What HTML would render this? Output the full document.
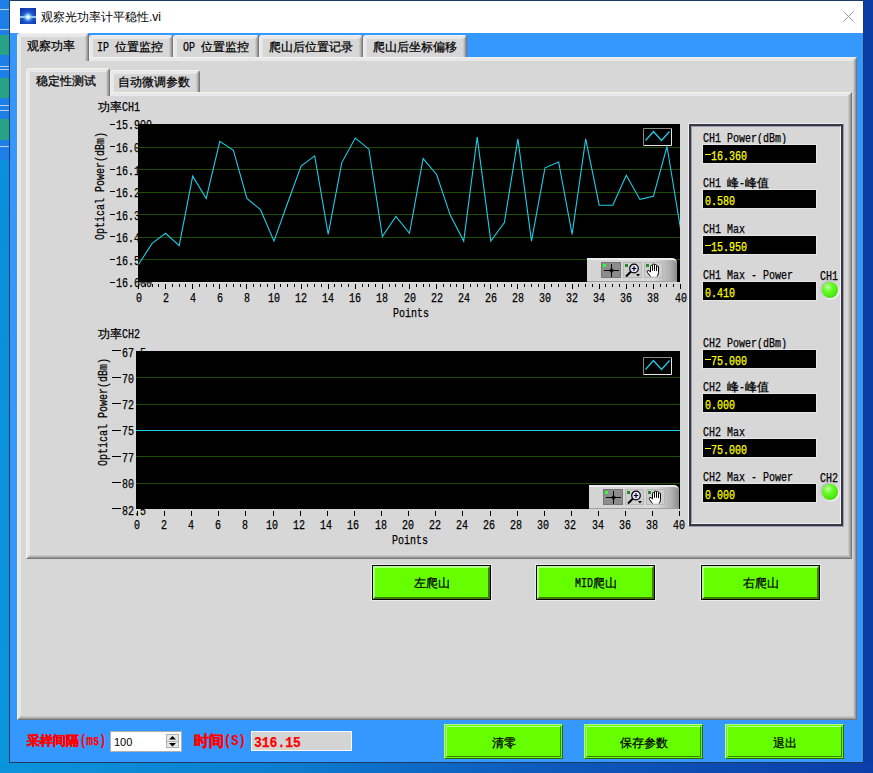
<!DOCTYPE html>
<html><head><meta charset="utf-8">
<style>
*{margin:0;padding:0;box-sizing:border-box}
html,body{width:873px;height:773px;overflow:hidden}
body{position:relative;background:#0a3ca6;font-family:"Liberation Mono",monospace;font-size:12px;color:#000}
.a{position:absolute}
.t{position:absolute;white-space:pre;font-family:"Liberation Mono",monospace;font-size:12px;line-height:12px;transform-origin:0 0;-webkit-text-stroke:0.25px currentColor}
.bev{position:absolute;background:#d7d7d7;border-style:solid;border-width:1px;border-color:#f4f1ec #777 #777 #f4f1ec}
.bev::before{content:"";position:absolute;left:0;top:0;right:0;bottom:0;border-style:solid;border-width:1px;border-color:#e8e8e8 #999 #999 #e8e8e8}
.bev::after{content:"";position:absolute;left:1px;top:1px;right:1px;bottom:1px;border-style:solid;border-width:1px;border-color:#e8e8e8 #b4b4b4 #b4b4b4 #e8e8e8;box-shadow:inset -1px -1px 0 #c8c8c8,inset 1px 1px 0 #e8e8e8}
.tab{position:absolute;background:#d7d7d7;border-style:solid;border-width:1px 1px 0 1px;border-color:#f4f1ec #777 transparent #f4f1ec;border-radius:3px 3px 0 0}
.tab::before{content:"";position:absolute;left:0;top:0;right:0;bottom:0;border-style:solid;border-width:1px 1px 0 1px;border-color:#e8e8e8 #999 transparent #e8e8e8;border-radius:2px 2px 0 0}
.tab::after{content:"";position:absolute;left:1px;top:1px;right:1px;bottom:0;border-style:solid;border-width:1px 1px 0 1px;border-color:#e8e8e8 #b4b4b4 transparent #e8e8e8;box-shadow:inset -1px 0 0 #c8c8c8,inset 1px 1px 0 #e8e8e8;border-radius:1px 1px 0 0}
.ind{position:absolute;background:#000;outline:1px solid #e6e6e6}
.gbtn{position:absolute;background:#66ff00;border:1px solid #000;outline:1px solid #ececec}
.gbtn::before{content:"";position:absolute;left:0;top:0;right:0;bottom:0;border-style:solid;border-width:2px;border-color:#b4ff8a #3a7d00 #3a7d00 #b4ff8a}
.gb2{position:absolute;background:#66ff00;border-style:solid;border-width:1px;border-color:#b4ff88 #2a6a00 #2a6a00 #b4ff88}
.gb2::before{content:"";position:absolute;left:1px;top:1px;right:1px;bottom:1px;border-style:solid;border-width:1px;border-color:#c4ffa4 #3a8000 #3a8000 #c4ffa4}
</style></head><body>

<div class="a" style="left:0;top:0;width:9px;height:773px;background:linear-gradient(#0a8ee0,#0893da 60%,#0a96dc)"></div>
<div class="a" style="left:0;top:0px;width:9px;height:35px;background:#1f7fe8"></div>
<div class="a" style="left:0;top:35px;width:9px;height:20px;background:#26a387"></div>
<div class="a" style="left:0;top:55px;width:9px;height:23px;background:#1f7fe8"></div>
<div class="a" style="left:0;top:78px;width:9px;height:20px;background:#26a387"></div>
<div class="a" style="left:0;top:98px;width:9px;height:21px;background:#1f7fe8"></div>
<div class="a" style="left:0;top:119px;width:9px;height:21px;background:#26a387"></div>
<div class="a" style="left:0;top:140px;width:9px;height:20px;background:#1f7fe8"></div>
<div class="a" style="left:0;top:9px;width:9px;height:1px;background:#b9d4f0"></div>
<div class="a" style="left:0;top:29px;width:9px;height:1px;background:#b9d4f0"></div>
<div class="a" style="left:0;top:66px;width:9px;height:1px;background:#b9d4f0"></div>
<div class="a" style="left:0;top:69px;width:9px;height:1px;background:#b9d4f0"></div>
<div class="a" style="left:0;top:105px;width:9px;height:1px;background:#b9d4f0"></div>
<div class="a" style="left:0;top:110px;width:9px;height:1px;background:#b9d4f0"></div>
<div class="a" style="left:0;top:146px;width:9px;height:1px;background:#b9d4f0"></div>
<div class="a" style="left:0;top:763px;width:873px;height:10px;background:linear-gradient(90deg,#0a94dc,#0b7fd0 30%,#0d5cbc 60%,#0b3ea8)"></div>
<div class="a" style="left:9px;top:0;width:855px;height:763px;background:#1b3a66"></div>
<div class="a" style="left:10px;top:1px;width:853px;height:32px;background:#fff"></div>
<div class="a" style="left:10px;top:33px;width:853px;height:729px;background:#3498ff"></div>
<div class="a" style="left:20px;top:8px;width:16px;height:16px;background:radial-gradient(circle at 8px 9px,#ffffff 0,#d8f0ff 1.5px,rgba(120,200,255,0.6) 3px,transparent 5px),linear-gradient(180deg,transparent 8px,rgba(160,220,255,0.85) 8px,rgba(160,220,255,0.85) 10px,transparent 10px),radial-gradient(circle at 8px 9px,#4a9af0,#1a50c8 50%,#0c2c96)"></div>
<div class="a" style="left:41px;top:11px;font-family:'Liberation Sans',sans-serif;font-size:12px;line-height:12px;color:#000;white-space:pre">观察光功率计平稳性.vi</div>
<svg class="a" style="left:843px;top:11px" width="11" height="11"><path d="M0.5 0.5L10.5 10.5M10.5 0.5L0.5 10.5" stroke="#999" stroke-width="1"/></svg>
<div class="bev" style="left:17px;top:57px;width:840px;height:663px"></div>
<div class="tab" style="left:89px;top:35px;width:84px;height:22px"></div>
<div class="tab" style="left:173px;top:35px;width:86px;height:22px"></div>
<div class="tab" style="left:259px;top:35px;width:104px;height:22px"></div>
<div class="tab" style="left:363px;top:35px;width:104px;height:22px"></div>
<div class="tab" style="left:17px;top:33px;width:72px;height:28px;z-index:2"></div>
<div class="a" style="left:21px;top:57px;width:64px;height:4px;background:#d7d7d7;z-index:3"></div>
<div class="t" style="left:27.00px;top:41.00px;font-size:12px;z-index:4;">观察功率</div>
<div class="t" style="left:97.00px;top:42.00px;font-size:12px;transform:scaleX(0.8333);">IP </div>
<div class="t" style="left:115.00px;top:42.00px;font-size:12px;">位置监控</div>
<div class="t" style="left:183.00px;top:42.00px;font-size:12px;transform:scaleX(0.8333);">OP </div>
<div class="t" style="left:201.00px;top:42.00px;font-size:12px;">位置监控</div>
<div class="t" style="left:269.00px;top:42.00px;font-size:12px;">爬山后位置记录</div>
<div class="t" style="left:373.00px;top:42.00px;font-size:12px;">爬山后坐标偏移</div>
<div class="bev" style="left:26px;top:92px;width:826px;height:467px"></div>
<div class="tab" style="left:110px;top:70px;width:90px;height:22px"></div>
<div class="tab" style="left:26px;top:68px;width:84px;height:28px;z-index:2"></div>
<div class="a" style="left:30px;top:92px;width:76px;height:4px;background:#d7d7d7;z-index:3"></div>
<div class="t" style="left:36.00px;top:75.50px;font-size:12px;z-index:4;">稳定性测试</div>
<div class="t" style="left:118.00px;top:77.00px;font-size:12px;">自动微调参数</div>
<div class="t" style="left:98.00px;top:102.00px;font-size:12px;">功率</div>
<div class="t" style="left:122.00px;top:102.00px;font-size:12px;transform:scaleX(0.8333);">CH1</div>
<div class="t" style="left:47px;top:180px;width:108px;height:12px;transform-origin:54px 6px;transform:rotate(-90deg)"><div style="position:absolute;left:0;top:0;transform-origin:0 0;transform:scaleX(0.8333)">Optical Power(dBm)</div></div>
<div class="a" style="left:110px;top:124px;width:5px;height:1px;background:#000"></div>
<div class="t" style="left:116.00px;top:120.00px;font-size:12px;transform:scaleX(0.8333);">15.900</div>
<div class="a" style="left:110px;top:146px;width:5px;height:1px;background:#000"></div>
<div class="t" style="left:116.00px;top:143.00px;font-size:12px;transform:scaleX(0.8333);">16.000</div>
<div class="a" style="left:110px;top:169px;width:5px;height:1px;background:#000"></div>
<div class="t" style="left:116.00px;top:166.00px;font-size:12px;transform:scaleX(0.8333);">16.100</div>
<div class="a" style="left:110px;top:191px;width:5px;height:1px;background:#000"></div>
<div class="t" style="left:116.00px;top:188.00px;font-size:12px;transform:scaleX(0.8333);">16.200</div>
<div class="a" style="left:110px;top:214px;width:5px;height:1px;background:#000"></div>
<div class="t" style="left:116.00px;top:211.00px;font-size:12px;transform:scaleX(0.8333);">16.300</div>
<div class="a" style="left:110px;top:236px;width:5px;height:1px;background:#000"></div>
<div class="t" style="left:116.00px;top:233.00px;font-size:12px;transform:scaleX(0.8333);">16.400</div>
<div class="a" style="left:110px;top:259px;width:5px;height:1px;background:#000"></div>
<div class="t" style="left:116.00px;top:256.00px;font-size:12px;transform:scaleX(0.8333);">16.500</div>
<div class="a" style="left:110px;top:282px;width:5px;height:1px;background:#000"></div>
<div class="t" style="left:116.00px;top:278.00px;font-size:12px;transform:scaleX(0.8333);">16.600</div>
<svg class="a" style="left:138px;top:124px" width="542" height="158"><rect x="0" y="0" width="542" height="158" fill="#000"/><line x1="0" y1="23.5" x2="542" y2="23.5" stroke="#214d03" stroke-width="1"/><line x1="0" y1="45.5" x2="542" y2="45.5" stroke="#214d03" stroke-width="1"/><line x1="0" y1="68.5" x2="542" y2="68.5" stroke="#214d03" stroke-width="1"/><line x1="0" y1="90.5" x2="542" y2="90.5" stroke="#214d03" stroke-width="1"/><line x1="0" y1="113.5" x2="542" y2="113.5" stroke="#214d03" stroke-width="1"/><line x1="0" y1="135.5" x2="542" y2="135.5" stroke="#214d03" stroke-width="1"/><polyline points="0.5,140.5 14.1,119.4 27.6,109.3 41.2,121.6 54.7,52.1 68.2,74.5 81.8,17.3 95.4,26.3 108.9,74.5 122.5,85.7 136.0,117.1 149.6,79.0 163.1,42.0 176.7,31.9 190.2,110.4 203.8,38.6 217.3,14.0 230.9,25.2 244.4,112.6 257.9,92.5 271.5,109.3 285.1,34.6 298.6,50.5 312.2,91.1 325.7,117.1 339.2,13.1 352.8,117.1 366.4,98.5 379.9,14.9 393.5,117.1 407.0,43.8 420.6,38.0 434.1,110.4 447.7,14.9 461.2,81.2 474.8,81.2 488.3,51.2 501.9,75.4 515.4,72.3 529.0,22.5 542.5,104.6" fill="none" stroke="#1fcbe6" stroke-width="1.1"/><path d="M505.5 21.5V4.5H533.5" stroke="#888" fill="none"/><path d="M533.5 4.5V21.5H505.5" stroke="#e6e6e6" fill="none"/><polyline points="507.5,16.5 515.5,7.5 523.5,16.5 531.5,7.5" stroke="#1fcbe6" fill="none" stroke-width="1.3"/></svg>
<div class="a" style="left:587px;top:258px;width:90px;height:24px;background:linear-gradient(90deg,#d4d4d4 0%,#d8d8d8 75%,#b0b0b0 92%,#8a8a8a 100%);border-top:2px solid #ececec;border-bottom:1px solid #a0a0a0;border-radius:0 5px 0 0"></div>
<div class="a" style="left:601px;top:262px;width:20px;height:16px;background:#8c8c8c;border:1px solid #777"></div>
<svg class="a" style="left:601px;top:262px" width="20" height="16"><path d="M10.5 2V15M3 8.5H18" stroke="#000" stroke-width="1"/><circle cx="10.5" cy="8.5" r="1.6" fill="none" stroke="#000"/><rect x="2" y="2" width="3" height="3" fill="#33ff33"/></svg>
<div class="a" style="left:623px;top:262px;width:19px;height:16px;background:#cfcfcf;border:1px solid #b8b8b8"></div>
<svg class="a" style="left:623px;top:262px" width="19" height="16"><circle cx="11" cy="6.5" r="4.3" fill="#e0e0ff" stroke="#000" stroke-width="1.2"/><path d="M11 4.3V8.7M8.8 6.5H13.2" stroke="#000" stroke-width="1.2"/><path d="M8 9.5L3 14.5" stroke="#000" stroke-width="2"/><path d="M13 12H17L15 14.5Z" fill="#000"/><rect x="2" y="2" width="3" height="3" fill="#2a8a2a"/></svg>
<div class="a" style="left:644px;top:262px;width:19px;height:16px;background:#cfcfcf;border:1px solid #b8b8b8"></div>
<svg class="a" style="left:644px;top:262px" width="19" height="16"><path d="M6.5 14.5L3.5 10.5Q2.5 9 4 8.5Q5 8.3 6.5 10V4.5Q6.5 3.5 7.5 3.5Q8.5 3.5 8.5 4.5V8.5V3Q8.5 2 9.5 2Q10.5 2 10.5 3V8.5V3.5Q10.5 2.5 11.5 2.5Q12.5 2.5 12.5 3.5V9V5Q12.5 4 13.5 4Q14.5 4 14.5 5V10.5Q14.5 13 13 14.5" fill="#fff" stroke="#000" stroke-width="1"/><rect x="2" y="2" width="3" height="3" fill="#2a8a2a"/></svg>
<svg class="a" style="left:130px;top:282px" width="560" height="10"><line x1="8.5" y1="2" x2="8.5" y2="7" stroke="#000"/><line x1="15.5" y1="2" x2="15.5" y2="5" stroke="#000"/><line x1="22.5" y1="2" x2="22.5" y2="5" stroke="#000"/><line x1="28.5" y1="2" x2="28.5" y2="5" stroke="#000"/><line x1="35.5" y1="2" x2="35.5" y2="7" stroke="#000"/><line x1="42.5" y1="2" x2="42.5" y2="5" stroke="#000"/><line x1="49.5" y1="2" x2="49.5" y2="5" stroke="#000"/><line x1="55.5" y1="2" x2="55.5" y2="5" stroke="#000"/><line x1="62.5" y1="2" x2="62.5" y2="7" stroke="#000"/><line x1="69.5" y1="2" x2="69.5" y2="5" stroke="#000"/><line x1="76.5" y1="2" x2="76.5" y2="5" stroke="#000"/><line x1="83.5" y1="2" x2="83.5" y2="5" stroke="#000"/><line x1="89.5" y1="2" x2="89.5" y2="7" stroke="#000"/><line x1="96.5" y1="2" x2="96.5" y2="5" stroke="#000"/><line x1="103.5" y1="2" x2="103.5" y2="5" stroke="#000"/><line x1="110.5" y1="2" x2="110.5" y2="5" stroke="#000"/><line x1="116.5" y1="2" x2="116.5" y2="7" stroke="#000"/><line x1="123.5" y1="2" x2="123.5" y2="5" stroke="#000"/><line x1="130.5" y1="2" x2="130.5" y2="5" stroke="#000"/><line x1="137.5" y1="2" x2="137.5" y2="5" stroke="#000"/><line x1="144.5" y1="2" x2="144.5" y2="7" stroke="#000"/><line x1="150.5" y1="2" x2="150.5" y2="5" stroke="#000"/><line x1="157.5" y1="2" x2="157.5" y2="5" stroke="#000"/><line x1="164.5" y1="2" x2="164.5" y2="5" stroke="#000"/><line x1="171.5" y1="2" x2="171.5" y2="7" stroke="#000"/><line x1="177.5" y1="2" x2="177.5" y2="5" stroke="#000"/><line x1="184.5" y1="2" x2="184.5" y2="5" stroke="#000"/><line x1="191.5" y1="2" x2="191.5" y2="5" stroke="#000"/><line x1="198.5" y1="2" x2="198.5" y2="7" stroke="#000"/><line x1="204.5" y1="2" x2="204.5" y2="5" stroke="#000"/><line x1="211.5" y1="2" x2="211.5" y2="5" stroke="#000"/><line x1="218.5" y1="2" x2="218.5" y2="5" stroke="#000"/><line x1="225.5" y1="2" x2="225.5" y2="7" stroke="#000"/><line x1="232.5" y1="2" x2="232.5" y2="5" stroke="#000"/><line x1="238.5" y1="2" x2="238.5" y2="5" stroke="#000"/><line x1="245.5" y1="2" x2="245.5" y2="5" stroke="#000"/><line x1="252.5" y1="2" x2="252.5" y2="7" stroke="#000"/><line x1="259.5" y1="2" x2="259.5" y2="5" stroke="#000"/><line x1="265.5" y1="2" x2="265.5" y2="5" stroke="#000"/><line x1="272.5" y1="2" x2="272.5" y2="5" stroke="#000"/><line x1="279.5" y1="2" x2="279.5" y2="7" stroke="#000"/><line x1="286.5" y1="2" x2="286.5" y2="5" stroke="#000"/><line x1="293.5" y1="2" x2="293.5" y2="5" stroke="#000"/><line x1="299.5" y1="2" x2="299.5" y2="5" stroke="#000"/><line x1="306.5" y1="2" x2="306.5" y2="7" stroke="#000"/><line x1="313.5" y1="2" x2="313.5" y2="5" stroke="#000"/><line x1="320.5" y1="2" x2="320.5" y2="5" stroke="#000"/><line x1="326.5" y1="2" x2="326.5" y2="5" stroke="#000"/><line x1="333.5" y1="2" x2="333.5" y2="7" stroke="#000"/><line x1="340.5" y1="2" x2="340.5" y2="5" stroke="#000"/><line x1="347.5" y1="2" x2="347.5" y2="5" stroke="#000"/><line x1="354.5" y1="2" x2="354.5" y2="5" stroke="#000"/><line x1="360.5" y1="2" x2="360.5" y2="7" stroke="#000"/><line x1="367.5" y1="2" x2="367.5" y2="5" stroke="#000"/><line x1="374.5" y1="2" x2="374.5" y2="5" stroke="#000"/><line x1="381.5" y1="2" x2="381.5" y2="5" stroke="#000"/><line x1="387.5" y1="2" x2="387.5" y2="7" stroke="#000"/><line x1="394.5" y1="2" x2="394.5" y2="5" stroke="#000"/><line x1="401.5" y1="2" x2="401.5" y2="5" stroke="#000"/><line x1="408.5" y1="2" x2="408.5" y2="5" stroke="#000"/><line x1="414.5" y1="2" x2="414.5" y2="7" stroke="#000"/><line x1="421.5" y1="2" x2="421.5" y2="5" stroke="#000"/><line x1="428.5" y1="2" x2="428.5" y2="5" stroke="#000"/><line x1="435.5" y1="2" x2="435.5" y2="5" stroke="#000"/><line x1="442.5" y1="2" x2="442.5" y2="7" stroke="#000"/><line x1="448.5" y1="2" x2="448.5" y2="5" stroke="#000"/><line x1="455.5" y1="2" x2="455.5" y2="5" stroke="#000"/><line x1="462.5" y1="2" x2="462.5" y2="5" stroke="#000"/><line x1="469.5" y1="2" x2="469.5" y2="7" stroke="#000"/><line x1="475.5" y1="2" x2="475.5" y2="5" stroke="#000"/><line x1="482.5" y1="2" x2="482.5" y2="5" stroke="#000"/><line x1="489.5" y1="2" x2="489.5" y2="5" stroke="#000"/><line x1="496.5" y1="2" x2="496.5" y2="7" stroke="#000"/><line x1="503.5" y1="2" x2="503.5" y2="5" stroke="#000"/><line x1="509.5" y1="2" x2="509.5" y2="5" stroke="#000"/><line x1="516.5" y1="2" x2="516.5" y2="5" stroke="#000"/><line x1="523.5" y1="2" x2="523.5" y2="7" stroke="#000"/><line x1="530.5" y1="2" x2="530.5" y2="5" stroke="#000"/><line x1="536.5" y1="2" x2="536.5" y2="5" stroke="#000"/><line x1="543.5" y1="2" x2="543.5" y2="5" stroke="#000"/><line x1="550.5" y1="2" x2="550.5" y2="7" stroke="#000"/></svg>
<div class="t" style="left:135.50px;top:293.00px;font-size:12px;transform:scaleX(0.8333);">0</div>
<div class="t" style="left:162.60px;top:293.00px;font-size:12px;transform:scaleX(0.8333);">2</div>
<div class="t" style="left:189.70px;top:293.00px;font-size:12px;transform:scaleX(0.8333);">4</div>
<div class="t" style="left:216.80px;top:293.00px;font-size:12px;transform:scaleX(0.8333);">6</div>
<div class="t" style="left:243.90px;top:293.00px;font-size:12px;transform:scaleX(0.8333);">8</div>
<div class="t" style="left:268.00px;top:293.00px;font-size:12px;transform:scaleX(0.8333);">10</div>
<div class="t" style="left:295.10px;top:293.00px;font-size:12px;transform:scaleX(0.8333);">12</div>
<div class="t" style="left:322.20px;top:293.00px;font-size:12px;transform:scaleX(0.8333);">14</div>
<div class="t" style="left:349.30px;top:293.00px;font-size:12px;transform:scaleX(0.8333);">16</div>
<div class="t" style="left:376.40px;top:293.00px;font-size:12px;transform:scaleX(0.8333);">18</div>
<div class="t" style="left:403.50px;top:293.00px;font-size:12px;transform:scaleX(0.8333);">20</div>
<div class="t" style="left:430.60px;top:293.00px;font-size:12px;transform:scaleX(0.8333);">22</div>
<div class="t" style="left:457.70px;top:293.00px;font-size:12px;transform:scaleX(0.8333);">24</div>
<div class="t" style="left:484.80px;top:293.00px;font-size:12px;transform:scaleX(0.8333);">26</div>
<div class="t" style="left:511.90px;top:293.00px;font-size:12px;transform:scaleX(0.8333);">28</div>
<div class="t" style="left:539.00px;top:293.00px;font-size:12px;transform:scaleX(0.8333);">30</div>
<div class="t" style="left:566.10px;top:293.00px;font-size:12px;transform:scaleX(0.8333);">32</div>
<div class="t" style="left:593.20px;top:293.00px;font-size:12px;transform:scaleX(0.8333);">34</div>
<div class="t" style="left:620.30px;top:293.00px;font-size:12px;transform:scaleX(0.8333);">36</div>
<div class="t" style="left:647.40px;top:293.00px;font-size:12px;transform:scaleX(0.8333);">38</div>
<div class="t" style="left:674.50px;top:293.00px;font-size:12px;transform:scaleX(0.8333);">40</div>
<div class="t" style="left:393.00px;top:308.00px;font-size:12px;transform:scaleX(0.8333);">Points</div>
<div class="t" style="left:98.00px;top:329.00px;font-size:12px;">功率</div>
<div class="t" style="left:122.00px;top:329.00px;font-size:12px;transform:scaleX(0.8333);">CH2</div>
<div class="t" style="left:49.5px;top:406px;width:108px;height:12px;transform-origin:54px 6px;transform:rotate(-90deg)"><div style="position:absolute;left:0;top:0;transform-origin:0 0;transform:scaleX(0.8333)">Optical Power(dBm)</div></div>
<div class="a" style="left:112px;top:350px;width:9px;height:1px;background:#000"></div>
<div class="t" style="left:122.00px;top:348.00px;font-size:12px;transform:scaleX(0.8333);">67.5</div>
<div class="a" style="left:112px;top:377px;width:9px;height:1px;background:#000"></div>
<div class="t" style="left:122.00px;top:374.00px;font-size:12px;transform:scaleX(0.8333);">70</div>
<div class="a" style="left:112px;top:403px;width:9px;height:1px;background:#000"></div>
<div class="t" style="left:122.00px;top:400.00px;font-size:12px;transform:scaleX(0.8333);">72.5</div>
<div class="a" style="left:112px;top:430px;width:9px;height:1px;background:#000"></div>
<div class="t" style="left:122.00px;top:426.00px;font-size:12px;transform:scaleX(0.8333);">75</div>
<div class="a" style="left:112px;top:456px;width:9px;height:1px;background:#000"></div>
<div class="t" style="left:122.00px;top:453.00px;font-size:12px;transform:scaleX(0.8333);">77.5</div>
<div class="a" style="left:112px;top:482px;width:9px;height:1px;background:#000"></div>
<div class="t" style="left:122.00px;top:479.00px;font-size:12px;transform:scaleX(0.8333);">80</div>
<div class="a" style="left:112px;top:508px;width:9px;height:1px;background:#000"></div>
<div class="t" style="left:122.00px;top:506.00px;font-size:12px;transform:scaleX(0.8333);">82.5</div>
<svg class="a" style="left:136px;top:351px" width="544" height="158"><rect x="0" y="0" width="544" height="158" fill="#000"/><line x1="0" y1="26.5" x2="544" y2="26.5" stroke="#214d03" stroke-width="1"/><line x1="0" y1="53.5" x2="544" y2="53.5" stroke="#214d03" stroke-width="1"/><line x1="0" y1="79.5" x2="544" y2="79.5" stroke="#214d03" stroke-width="1"/><line x1="0" y1="105.5" x2="544" y2="105.5" stroke="#214d03" stroke-width="1"/><line x1="0" y1="132.5" x2="544" y2="132.5" stroke="#214d03" stroke-width="1"/><polyline points="0,79.5 544,79.5" fill="none" stroke="#1fcbe6" stroke-width="1.1"/><path d="M507.5 23.5V6.5H535.5" stroke="#888" fill="none"/><path d="M535.5 6.5V23.5H507.5" stroke="#e6e6e6" fill="none"/><polyline points="509.5,18.5 517.5,9.5 525.5,18.5 533.5,9.5" stroke="#1fcbe6" fill="none" stroke-width="1.3"/></svg>
<div class="a" style="left:589px;top:485px;width:90px;height:24px;background:linear-gradient(90deg,#d4d4d4 0%,#d8d8d8 75%,#b0b0b0 92%,#8a8a8a 100%);border-top:2px solid #ececec;border-bottom:1px solid #a0a0a0;border-radius:0 5px 0 0"></div>
<div class="a" style="left:603px;top:489px;width:20px;height:16px;background:#8c8c8c;border:1px solid #777"></div>
<svg class="a" style="left:603px;top:489px" width="20" height="16"><path d="M10.5 2V15M3 8.5H18" stroke="#000" stroke-width="1"/><circle cx="10.5" cy="8.5" r="1.6" fill="none" stroke="#000"/><rect x="2" y="2" width="3" height="3" fill="#33ff33"/></svg>
<div class="a" style="left:625px;top:489px;width:19px;height:16px;background:#cfcfcf;border:1px solid #b8b8b8"></div>
<svg class="a" style="left:625px;top:489px" width="19" height="16"><circle cx="11" cy="6.5" r="4.3" fill="#e0e0ff" stroke="#000" stroke-width="1.2"/><path d="M11 4.3V8.7M8.8 6.5H13.2" stroke="#000" stroke-width="1.2"/><path d="M8 9.5L3 14.5" stroke="#000" stroke-width="2"/><path d="M13 12H17L15 14.5Z" fill="#000"/><rect x="2" y="2" width="3" height="3" fill="#2a8a2a"/></svg>
<div class="a" style="left:646px;top:489px;width:19px;height:16px;background:#cfcfcf;border:1px solid #b8b8b8"></div>
<svg class="a" style="left:646px;top:489px" width="19" height="16"><path d="M6.5 14.5L3.5 10.5Q2.5 9 4 8.5Q5 8.3 6.5 10V4.5Q6.5 3.5 7.5 3.5Q8.5 3.5 8.5 4.5V8.5V3Q8.5 2 9.5 2Q10.5 2 10.5 3V8.5V3.5Q10.5 2.5 11.5 2.5Q12.5 2.5 12.5 3.5V9V5Q12.5 4 13.5 4Q14.5 4 14.5 5V10.5Q14.5 13 13 14.5" fill="#fff" stroke="#000" stroke-width="1"/><rect x="2" y="2" width="3" height="3" fill="#2a8a2a"/></svg>
<svg class="a" style="left:130px;top:509px" width="560" height="10"><line x1="7.5" y1="2" x2="7.5" y2="7" stroke="#000"/><line x1="34.5" y1="2" x2="34.5" y2="7" stroke="#000"/><line x1="61.5" y1="2" x2="61.5" y2="7" stroke="#000"/><line x1="88.5" y1="2" x2="88.5" y2="7" stroke="#000"/><line x1="115.5" y1="2" x2="115.5" y2="7" stroke="#000"/><line x1="143.5" y1="2" x2="143.5" y2="7" stroke="#000"/><line x1="170.5" y1="2" x2="170.5" y2="7" stroke="#000"/><line x1="197.5" y1="2" x2="197.5" y2="7" stroke="#000"/><line x1="224.5" y1="2" x2="224.5" y2="7" stroke="#000"/><line x1="251.5" y1="2" x2="251.5" y2="7" stroke="#000"/><line x1="278.5" y1="2" x2="278.5" y2="7" stroke="#000"/><line x1="305.5" y1="2" x2="305.5" y2="7" stroke="#000"/><line x1="332.5" y1="2" x2="332.5" y2="7" stroke="#000"/><line x1="360.5" y1="2" x2="360.5" y2="7" stroke="#000"/><line x1="387.5" y1="2" x2="387.5" y2="7" stroke="#000"/><line x1="414.5" y1="2" x2="414.5" y2="7" stroke="#000"/><line x1="441.5" y1="2" x2="441.5" y2="7" stroke="#000"/><line x1="468.5" y1="2" x2="468.5" y2="7" stroke="#000"/><line x1="495.5" y1="2" x2="495.5" y2="7" stroke="#000"/><line x1="522.5" y1="2" x2="522.5" y2="7" stroke="#000"/><line x1="549.5" y1="2" x2="549.5" y2="7" stroke="#000"/></svg>
<div class="t" style="left:133.50px;top:520.00px;font-size:12px;transform:scaleX(0.8333);">0</div>
<div class="t" style="left:160.62px;top:520.00px;font-size:12px;transform:scaleX(0.8333);">2</div>
<div class="t" style="left:187.74px;top:520.00px;font-size:12px;transform:scaleX(0.8333);">4</div>
<div class="t" style="left:214.86px;top:520.00px;font-size:12px;transform:scaleX(0.8333);">6</div>
<div class="t" style="left:241.98px;top:520.00px;font-size:12px;transform:scaleX(0.8333);">8</div>
<div class="t" style="left:266.10px;top:520.00px;font-size:12px;transform:scaleX(0.8333);">10</div>
<div class="t" style="left:293.22px;top:520.00px;font-size:12px;transform:scaleX(0.8333);">12</div>
<div class="t" style="left:320.34px;top:520.00px;font-size:12px;transform:scaleX(0.8333);">14</div>
<div class="t" style="left:347.46px;top:520.00px;font-size:12px;transform:scaleX(0.8333);">16</div>
<div class="t" style="left:374.58px;top:520.00px;font-size:12px;transform:scaleX(0.8333);">18</div>
<div class="t" style="left:401.70px;top:520.00px;font-size:12px;transform:scaleX(0.8333);">20</div>
<div class="t" style="left:428.82px;top:520.00px;font-size:12px;transform:scaleX(0.8333);">22</div>
<div class="t" style="left:455.94px;top:520.00px;font-size:12px;transform:scaleX(0.8333);">24</div>
<div class="t" style="left:483.06px;top:520.00px;font-size:12px;transform:scaleX(0.8333);">26</div>
<div class="t" style="left:510.18px;top:520.00px;font-size:12px;transform:scaleX(0.8333);">28</div>
<div class="t" style="left:537.30px;top:520.00px;font-size:12px;transform:scaleX(0.8333);">30</div>
<div class="t" style="left:564.42px;top:520.00px;font-size:12px;transform:scaleX(0.8333);">32</div>
<div class="t" style="left:591.54px;top:520.00px;font-size:12px;transform:scaleX(0.8333);">34</div>
<div class="t" style="left:618.66px;top:520.00px;font-size:12px;transform:scaleX(0.8333);">36</div>
<div class="t" style="left:645.78px;top:520.00px;font-size:12px;transform:scaleX(0.8333);">38</div>
<div class="t" style="left:672.90px;top:520.00px;font-size:12px;transform:scaleX(0.8333);">40</div>
<div class="t" style="left:392.00px;top:535.00px;font-size:12px;transform:scaleX(0.8333);">Points</div>
<div class="a" style="left:688px;top:123px;width:156px;height:404px;border-style:solid;border-width:1px;border-color:#eeeeee #9a9aaa #9a9aaa #eeeeee"><div style="position:absolute;left:0;top:0;right:0;bottom:0;border:2px solid #383848"><div style="position:absolute;left:0;top:0;right:0;bottom:0;border-style:solid;border-width:1px;border-color:#9a9aaa #f2f2f2 #f2f2f2 #9a9aaa"></div></div></div>
<div class="t" style="left:703.00px;top:133.00px;font-size:12px;transform:scaleX(0.8333);">CH1 Power(dBm)</div>
<div class="ind" style="left:703px;top:145px;width:113px;height:18px"></div>
<div class="a" style="left:705px;top:154px;width:6px;height:1px;background:#ffff00"></div>
<div class="t" style="left:711.00px;top:151.00px;font-size:12px;transform:scaleX(0.8333);color:#ffff00;">16.360</div>
<div class="t" style="left:703.00px;top:178.00px;font-size:12px;transform:scaleX(0.8333);">CH1 </div>
<div class="t" style="left:727.00px;top:178.00px;font-size:12px;">峰</div>
<div class="t" style="left:739.00px;top:178.00px;font-size:12px;transform:scaleX(0.8333);">-</div>
<div class="t" style="left:745.00px;top:178.00px;font-size:12px;">峰值</div>
<div class="ind" style="left:703px;top:190px;width:113px;height:18px"></div>
<div class="t" style="left:705.00px;top:196.00px;font-size:12px;transform:scaleX(0.8333);color:#ffff00;">0.580</div>
<div class="t" style="left:703.00px;top:224.00px;font-size:12px;transform:scaleX(0.8333);">CH1 Max</div>
<div class="ind" style="left:703px;top:236px;width:113px;height:18px"></div>
<div class="a" style="left:705px;top:245px;width:6px;height:1px;background:#ffff00"></div>
<div class="t" style="left:711.00px;top:242.00px;font-size:12px;transform:scaleX(0.8333);color:#ffff00;">15.950</div>
<div class="t" style="left:703.00px;top:270.00px;font-size:12px;transform:scaleX(0.8333);">CH1 Max - Power</div>
<div class="ind" style="left:703px;top:282px;width:113px;height:18px"></div>
<div class="t" style="left:705.00px;top:288.00px;font-size:12px;transform:scaleX(0.8333);color:#ffff00;">0.410</div>
<div class="t" style="left:703.00px;top:338.00px;font-size:12px;transform:scaleX(0.8333);">CH2 Power(dBm)</div>
<div class="ind" style="left:703px;top:350px;width:113px;height:18px"></div>
<div class="a" style="left:705px;top:359px;width:6px;height:1px;background:#ffff00"></div>
<div class="t" style="left:711.00px;top:356.00px;font-size:12px;transform:scaleX(0.8333);color:#ffff00;">75.000</div>
<div class="t" style="left:703.00px;top:382.00px;font-size:12px;transform:scaleX(0.8333);">CH2 </div>
<div class="t" style="left:727.00px;top:382.00px;font-size:12px;">峰</div>
<div class="t" style="left:739.00px;top:382.00px;font-size:12px;transform:scaleX(0.8333);">-</div>
<div class="t" style="left:745.00px;top:382.00px;font-size:12px;">峰值</div>
<div class="ind" style="left:703px;top:394px;width:113px;height:18px"></div>
<div class="t" style="left:705.00px;top:400.00px;font-size:12px;transform:scaleX(0.8333);color:#ffff00;">0.000</div>
<div class="t" style="left:703.00px;top:427.00px;font-size:12px;transform:scaleX(0.8333);">CH2 Max</div>
<div class="ind" style="left:703px;top:439px;width:113px;height:18px"></div>
<div class="a" style="left:705px;top:448px;width:6px;height:1px;background:#ffff00"></div>
<div class="t" style="left:711.00px;top:445.00px;font-size:12px;transform:scaleX(0.8333);color:#ffff00;">75.000</div>
<div class="t" style="left:703.00px;top:472.00px;font-size:12px;transform:scaleX(0.8333);">CH2 Max - Power</div>
<div class="ind" style="left:703px;top:484px;width:113px;height:18px"></div>
<div class="t" style="left:705.00px;top:490.00px;font-size:12px;transform:scaleX(0.8333);color:#ffff00;">0.000</div>
<div class="t" style="left:820.00px;top:271.00px;font-size:12px;transform:scaleX(0.8333);">CH1</div>
<div class="t" style="left:820.00px;top:473.00px;font-size:12px;transform:scaleX(0.8333);">CH2</div>
<div class="a" style="left:820px;top:280px;width:20px;height:20px;border-radius:50%;background:linear-gradient(135deg,#b0b0b0,#d7d7d7 50%,#ffffff)"></div>
<div class="a" style="left:822px;top:282px;width:16px;height:16px;border-radius:50%;background:radial-gradient(circle at 6px 5px,#c8ffb0 0,#66ff22 30%,#33cc00 100%)"></div>
<div class="a" style="left:820px;top:482px;width:20px;height:20px;border-radius:50%;background:linear-gradient(135deg,#b0b0b0,#d7d7d7 50%,#ffffff)"></div>
<div class="a" style="left:822px;top:484px;width:16px;height:16px;border-radius:50%;background:radial-gradient(circle at 6px 5px,#c8ffb0 0,#66ff22 30%,#33cc00 100%)"></div>
<div class="gbtn" style="left:372px;top:565px;width:119px;height:35px"></div>
<div class="t" style="left:413.50px;top:578.00px;font-size:12px;">左爬山</div>
<div class="gbtn" style="left:536px;top:565px;width:119px;height:35px"></div>
<div class="t" style="left:574.50px;top:578.00px;font-size:12px;transform:scaleX(0.8333);">MID</div>
<div class="t" style="left:592.50px;top:578.00px;font-size:12px;">爬山</div>
<div class="gbtn" style="left:701px;top:565px;width:119px;height:35px"></div>
<div class="t" style="left:742.50px;top:578.00px;font-size:12px;">右爬山</div>
<div class="t" style="left:27.00px;top:735.50px;font-size:13px;color:#ff0000;font-weight:bold;-webkit-text-stroke:0.5px #ff0000;">采样间隔</div>
<div class="t" style="left:80.00px;top:735.00px;font-size:14px;transform:scaleX(0.7738);color:#ff0000;font-weight:bold;">(ms)</div>
<div class="a" style="left:110px;top:731px;width:72px;height:21px;background:#fff;border:1px solid #b0b0b0"></div>
<div class="a" style="left:114px;top:736px;font-family:'Liberation Sans',sans-serif;font-size:11px;line-height:12px;white-space:pre">100</div>
<svg class="a" style="left:166px;top:734px" width="13" height="14"><rect x="0.5" y="0.5" width="12" height="13" fill="#e8e8e8" stroke="#b0b0b0"/><line x1="1" y1="7.5" x2="12" y2="7.5" stroke="#b0b0b0"/><path d="M3 5.5L6.5 2L10 5.5Z M3 9L6.5 12.5L10 9Z" fill="#000"/></svg>
<div class="t" style="left:193.50px;top:735.50px;font-size:14.5px;color:#ff0000;font-weight:bold;-webkit-text-stroke:0.5px #ff0000;">时间</div>
<div class="t" style="left:224.00px;top:735.00px;font-size:14px;transform:scaleX(0.8690);color:#ff0000;font-weight:bold;">(S)</div>
<div class="a" style="left:251px;top:731px;width:101px;height:20px;background:#d4d4d4;border:1px solid #fafafa"></div>
<div class="t" style="left:253.50px;top:736.50px;font-size:14px;transform:scaleX(0.9286);color:#ff0000;font-weight:bold;">316.15</div>
<div class="gb2" style="left:444px;top:724px;width:119px;height:35px"></div>
<div class="t" style="left:491.50px;top:737.50px;font-size:12px;">清零</div>
<div class="gb2" style="left:584px;top:724px;width:119px;height:35px"></div>
<div class="t" style="left:619.50px;top:737.50px;font-size:12px;">保存参数</div>
<div class="gb2" style="left:725px;top:724px;width:119px;height:35px"></div>
<div class="t" style="left:772.50px;top:737.50px;font-size:12px;">退出</div>
</body></html>
